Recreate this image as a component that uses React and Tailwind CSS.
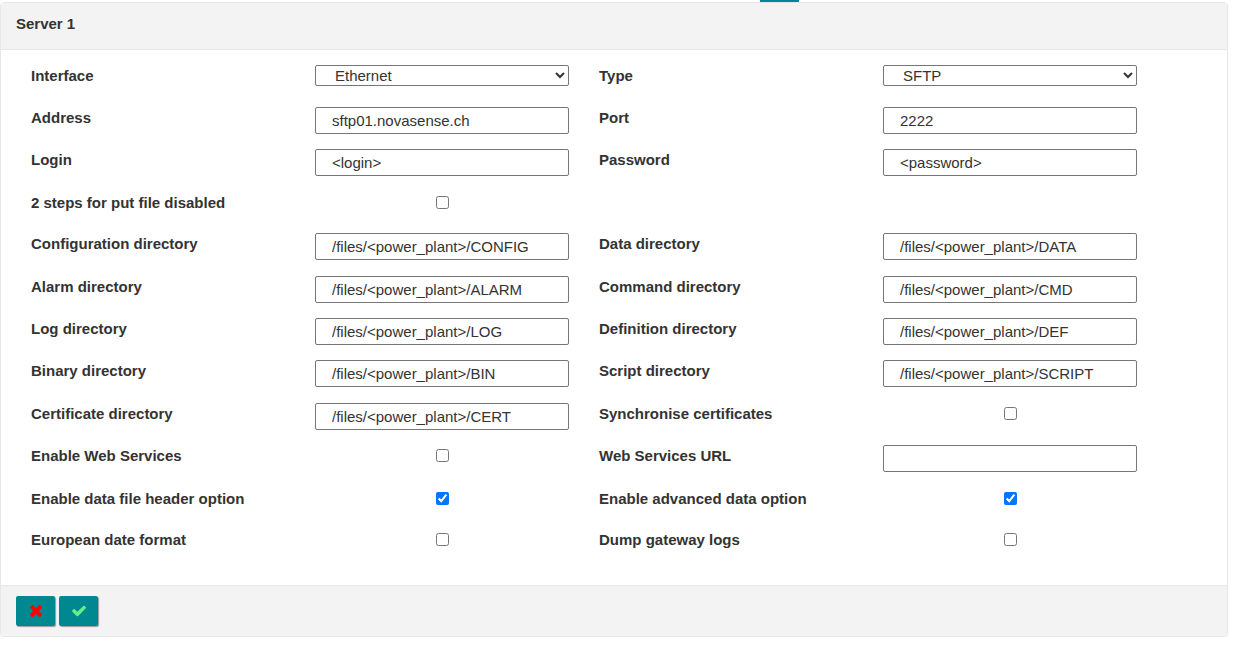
const rows = [
  [['Interface', 'select', 'Ethernet'], ['Type', 'select', 'SFTP']],
  [['Address', 'text', 'sftp01.novasense.ch'], ['Port', 'text', '2222']],
  [['Login', 'text', '<login>'], ['Password', 'text', '<password>']],
  [['2 steps for put file disabled', 'check', false], null],
  [['Configuration directory', 'text', '/files/<power_plant>/CONFIG'], ['Data directory', 'text', '/files/<power_plant>/DATA']],
  [['Alarm directory', 'text', '/files/<power_plant>/ALARM'], ['Command directory', 'text', '/files/<power_plant>/CMD']],
  [['Log directory', 'text', '/files/<power_plant>/LOG'], ['Definition directory', 'text', '/files/<power_plant>/DEF']],
  [['Binary directory', 'text', '/files/<power_plant>/BIN'], ['Script directory', 'text', '/files/<power_plant>/SCRIPT']],
  [['Certificate directory', 'text', '/files/<power_plant>/CERT'], ['Synchronise certificates', 'check', false]],
  [['Enable Web Services', 'check', false], ['Web Services URL', 'text', '']],
  [['Enable data file header option', 'check', true], ['Enable advanced data option', 'check', true]],
  [['European date format', 'check', false], ['Dump gateway logs', 'check', false]],
];

function TimesIcon() {
  return (
    <svg viewBox="110 -1170 1188 1188" className="size-3 fill-[#ff0000]">
      <path
        transform="scale(1 -1)"
        d="M1298 214q0 -40 -28 -68l-136 -136q-28 -28 -68 -28t-68 28l-294 294l-294 -294q-28 -28 -68 -28t-68 28l-136 136q-28 28 -28 68t28 68l294 294l-294 294q-28 28 -28 68t28 68l136 136q28 28 68 28t68 -28l294 -294l294 294q28 28 68 28t68 -28l136 -136q28 -28 28 -68t-28 -68l-294 -294l294 -294q28 -28 28 -68z"
      />
    </svg>
  );
}

function CheckIcon() {
  return (
    <svg viewBox="121 -1202 1550 1188" className="h-3 w-3.5 fill-[#66ee88]">
      <path
        transform="scale(1 -1)"
        d="M1671 970q0 -40 -28 -68l-724 -724l-136 -136q-28 -28 -68 -28t-68 28l-136 136l-362 362q-28 28 -28 68t28 68l136 136q28 28 68 28t68 -28l294 -295l656 657q28 28 68 28t68 -28l136 -136q28 -28 28 -68z"
      />
    </svg>
  );
}

function Field({ type, value }) {
  if (type === 'select') {
    return (
      <select defaultValue={value} className="w-full rounded-xs border border-[#767676] bg-white px-3.75 text-[#333]">
        <option>{value}</option>
      </select>
    );
  }
  if (type === 'check') {
    return (
      <div className="flex justify-center pt-1">
        <input type="checkbox" defaultChecked={value} />
      </div>
    );
  }
  return (
    <input
      type="text"
      defaultValue={value}
      className="h-6.75 w-full rounded-xs border border-[#767676] bg-white px-4 text-[#333]"
    />
  );
}

function Cell({ item }) {
  if (!item) return <><div /><div /></>;
  return (
    <>
      <label className="font-bold text-[#333]">{item[0]}</label>
      <Field type={item[1]} value={item[2]} />
    </>
  );
}

export default function App() {
  return (
    <div className="bg-white pr-2.25 text-[15px] leading-normal font-['Liberation_Sans',sans-serif]">
      {/* Active tab marker */}
      <div className="ml-190 h-0.5 w-9.75 bg-[#008891]" />

      <div className="rounded-sm border border-gray-200 shadow-xs">
        <div className="h-11.75 border-b border-gray-200 bg-[#f3f3f3] px-3.75 pt-2.5 font-bold text-[#333]">
          Server 1
        </div>

        <div className="px-7.5 py-3.75">
          <div className="grid w-[1106px] grid-cols-4 grid-rows-[42px_repeat(2,42.4px)_41.4px_repeat(6,42.4px)_repeat(2,41.4px)] items-start gap-x-7.5">
            {rows.map((row) => (
              <div key={row[0][0]} className="contents">
                <Cell item={row[0]} />
                <Cell item={row[1]} />
              </div>
            ))}
          </div>
        </div>

        <div className="flex gap-1 rounded-b-sm border-t border-gray-200 bg-[#f3f3f3] px-3.75 py-2.5">
          <button className="flex h-7.5 w-9.75 items-center justify-center rounded-xs bg-[#008891] shadow-[1px_1px_1px_#999]">
            <TimesIcon />
          </button>
          <button className="flex h-7.5 w-9.75 items-center justify-center rounded-xs bg-[#008891] shadow-[1px_1px_1px_#999]">
            <CheckIcon />
          </button>
        </div>
      </div>
    </div>
  );
}
